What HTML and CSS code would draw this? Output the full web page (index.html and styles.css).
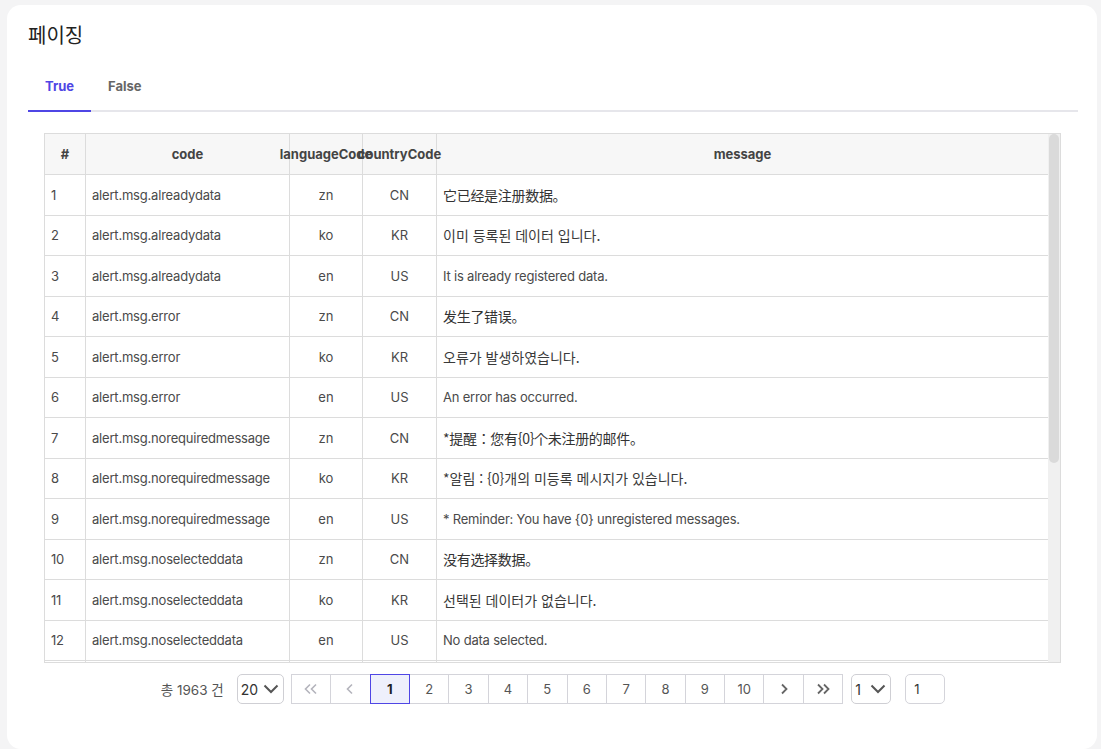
FILE: index.html
```html
<!DOCTYPE html>
<html lang="ko">
<head>
<meta charset="utf-8">
<title>페이징</title>
<link rel="stylesheet" href="styles.css">
</head>
<body>
<div class="card">
  <h1 class="title">페이징</h1>
  <div class="tabs">
    <div class="tab active">True</div>
    <div class="tab">False</div>
  </div>
  <div class="grid-wrap">
    <div class="grid-view">
    <table class="grid">
      <colgroup>
        <col class="c-no"><col class="c-code"><col class="c-lang"><col class="c-country"><col>
      </colgroup>
      <thead>
        <tr>
          <th><div class="th-in">#</div></th>
          <th><div class="th-in">code</div></th>
          <th><div class="th-in">languageCode</div></th>
          <th><div class="th-in">countryCode</div></th>
          <th class="last"><div class="th-in">message</div></th>
        </tr>
      </thead>
      <tbody>
        <tr><td>1</td><td>alert.msg.alreadydata</td><td class="ctr">zn</td><td class="ctr">CN</td><td class="last zh">它已经是注册数据。</td></tr>
        <tr><td>2</td><td>alert.msg.alreadydata</td><td class="ctr">ko</td><td class="ctr">KR</td><td class="last ko">이미 등록된 데이터 입니다.</td></tr>
        <tr><td>3</td><td>alert.msg.alreadydata</td><td class="ctr">en</td><td class="ctr">US</td><td class="last">It is already registered data.</td></tr>
        <tr><td>4</td><td>alert.msg.error</td><td class="ctr">zn</td><td class="ctr">CN</td><td class="last zh">发生了错误。</td></tr>
        <tr><td>5</td><td>alert.msg.error</td><td class="ctr">ko</td><td class="ctr">KR</td><td class="last ko">오류가 발생하였습니다.</td></tr>
        <tr><td>6</td><td>alert.msg.error</td><td class="ctr">en</td><td class="ctr">US</td><td class="last">An error has occurred.</td></tr>
        <tr><td>7</td><td>alert.msg.norequiredmessage</td><td class="ctr">zn</td><td class="ctr">CN</td><td class="last zh">*提醒：您有{0}个未注册的邮件。</td></tr>
        <tr><td>8</td><td>alert.msg.norequiredmessage</td><td class="ctr">ko</td><td class="ctr">KR</td><td class="last ko">*알림 : {0}개의 미등록 메시지가 있습니다.</td></tr>
        <tr><td>9</td><td>alert.msg.norequiredmessage</td><td class="ctr">en</td><td class="ctr">US</td><td class="last">* Reminder: You have {0} unregistered messages.</td></tr>
        <tr><td>10</td><td>alert.msg.noselecteddata</td><td class="ctr">zn</td><td class="ctr">CN</td><td class="last zh">没有选择数据。</td></tr>
        <tr><td>11</td><td>alert.msg.noselecteddata</td><td class="ctr">ko</td><td class="ctr">KR</td><td class="last ko">선택된 데이터가 없습니다.</td></tr>
        <tr><td>12</td><td>alert.msg.noselecteddata</td><td class="ctr">en</td><td class="ctr">US</td><td class="last">No data selected.</td></tr>
        <tr><td>13</td><td>alert.msg.save</td><td class="ctr">zn</td><td class="ctr">CN</td><td class="last zh">你要保存吗？</td></tr>
      </tbody>
    </table>
    </div>
    <div class="vbar"><div class="thumb"></div></div>
  </div>
  <div class="pager">
    <span class="total">총 1963 건</span>
    <div class="select sz">
      <span>20</span>
      <svg class="chev" width="16" height="10" viewBox="0 0 16 10"><polyline points="1.5,1.5 8,8 14.5,1.5" fill="none" stroke="#555" stroke-width="2"/></svg>
    </div>
    <div class="pages">
      <div class="pg dis"><svg width="14" height="12" viewBox="0 0 14 12"><polyline points="6,1.5 1.5,6 6,10.5" fill="none" stroke="currentColor" stroke-width="1.6"/><polyline points="12,1.5 7.5,6 12,10.5" fill="none" stroke="currentColor" stroke-width="1.6"/></svg></div>
      <div class="pg dis"><svg width="8" height="12" viewBox="0 0 8 12"><polyline points="6,1.5 1.5,6 6,10.5" fill="none" stroke="currentColor" stroke-width="1.6"/></svg></div>
      <div class="pg on">1</div>
      <div class="pg">2</div>
      <div class="pg">3</div>
      <div class="pg">4</div>
      <div class="pg">5</div>
      <div class="pg">6</div>
      <div class="pg">7</div>
      <div class="pg">8</div>
      <div class="pg">9</div>
      <div class="pg">10</div>
      <div class="pg nav"><svg width="8" height="12" viewBox="0 0 8 12"><polyline points="2,1.5 6.5,6 2,10.5" fill="none" stroke="currentColor" stroke-width="1.8"/></svg></div>
      <div class="pg nav"><svg width="14" height="12" viewBox="0 0 14 12"><polyline points="2,1.5 6.5,6 2,10.5" fill="none" stroke="currentColor" stroke-width="1.8"/><polyline points="8,1.5 12.5,6 8,10.5" fill="none" stroke="currentColor" stroke-width="1.8"/></svg></div>
    </div>
    <div class="select pgsel">
      <span>1</span>
      <svg class="chev" width="16" height="10" viewBox="0 0 16 10"><polyline points="1.5,1.5 8,8 14.5,1.5" fill="none" stroke="#555" stroke-width="2"/></svg>
    </div>
    <div class="goto">1</div>
  </div>
</div>
</body>
</html>
```

FILE: styles.css
```css
* { box-sizing: border-box; }
html, body { margin: 0; padding: 0; }
body {
  background: #f4f4f5;
  font-family: Inter, "Noto Sans CJK KR", "Noto Sans", sans-serif;
  color: #444;
  padding: 5px 4px 0 7px;
}
.card {
  background: #fff;
  border-radius: 14px;
  height: 744px;
  padding: 16px 19px 0 21px;
}
.title {
  margin: 0;
  font-size: 20px;
  font-weight: 400;
  line-height: 30px;
  color: #222;
}
.tabs {
  display: flex;
  margin-top: 13px;
  border-bottom: 2px solid #e6e6eb;
}
.tab {
  height: 48px;
  line-height: 44px;
  padding: 0 17px;
  font-size: 13px;
  font-weight: 700;
  color: #666;
  margin-bottom: -2px;
  border-bottom: 2px solid transparent;
}
.tab.active {
  color: #4f46e5;
  border-bottom-color: #4f46e5;
}
.grid-wrap {
  margin: 21px 17px 0 16px;
  height: 530px;
  border: 1px solid #dcdcdc;
  display: flex;
  overflow: hidden;
}
.grid-view {
  flex: 1;
  min-width: 0;
  overflow: hidden;
}
.vbar {
  width: 12px;
  flex: none;
  background: #f0f0f0;
  padding: 0 1px;
}
.thumb {
  height: 329px;
  background: #dadada;
  border-radius: 5px;
}
.grid {
  width: 100%;
  table-layout: fixed;
  border-collapse: separate;
  border-spacing: 0;
  font-size: 13px;
}
.c-no { width: 41px; }
.c-code { width: 204px; }
.c-lang { width: 73px; }
.c-country { width: 74px; }
.grid th {
  height: 41px;
  padding: 0;
  background: #f7f7f7;
  font-weight: 700;
  color: #444;
  border-right: 1px solid #dcdcdc;
  border-bottom: 1px solid #dcdcdc;
  white-space: nowrap;
}
.th-in {
  display: flex;
  justify-content: center;
  align-items: center;
  height: 40px;
}
.grid td {
  height: 40.5px;
  padding: 0 6px;
  color: #4a4a4a;
  letter-spacing: -0.2px;
  border-right: 1px solid #dcdcdc;
  border-bottom: 1px solid #dcdcdc;
  white-space: nowrap;
  overflow: hidden;
}
.grid .last { border-right: none; }
.grid td.ctr { text-align: center; letter-spacing: 0; }
.grid td.ko {
  font-size: 14px;
  letter-spacing: 0;
  color: #3a3a3a;
  font-family: "Noto Sans CJK KR", Inter, sans-serif;
}
.grid td.zh {
  font-size: 14px;
  letter-spacing: -0.3px;
  color: #333;
  font-family: "Noto Sans CJK SC", Inter, sans-serif;
}
.pager {
  display: flex;
  align-items: center;
  justify-content: center;
  margin-top: 11px;
  font-size: 13px;
  color: #555;
}
.total { margin-right: 13px; font-size: 13.5px; }
.select {
  height: 30px;
  border: 1px solid #cfcfd4;
  border-radius: 5px;
  display: flex;
  align-items: center;
  justify-content: space-between;
  padding: 0 4px 0 3px;
  font-size: 14px;
  color: #333;
}
.select.sz { width: 47px; margin-right: 7px; }
.select.pgsel { width: 40px; margin-left: 8px; }
.chev { display: block; }
.pages { display: flex; }
.pg {
  width: 40.4px;
  height: 30px;
  border: 1px solid #d4d4da;
  margin-left: -1px;
  display: flex;
  align-items: center;
  justify-content: center;
  color: #555;
  font-size: 13px;
}
.pg:first-child { margin-left: 0; }
.pg.dis { color: #b4b4bc; }
.pg.nav { color: #666; }
.pg.on {
  position: relative;
  z-index: 1;
  background: #eef0fc;
  border-color: #4f46e5;
  color: #222;
  font-weight: 700;
}
.goto {
  margin-left: 14px;
  width: 40px;
  height: 30px;
  border: 1px solid #d4d4da;
  border-radius: 5px;
  padding-left: 8px;
  line-height: 28px;
  font-size: 13px;
  color: #333;
}
```
